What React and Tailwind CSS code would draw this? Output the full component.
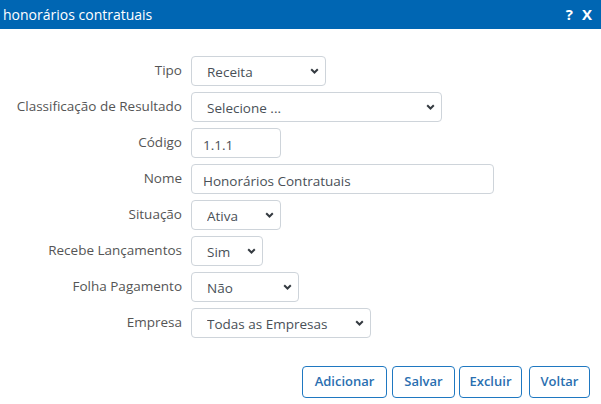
import React from 'react';

const font = { fontFamily: '"Open Sans", "Noto Sans", sans-serif' };

function Chevron() {
  return (
    <svg className="pointer-events-none absolute right-[7px] top-1/2 -translate-y-1/2" width="9" height="7" viewBox="0 0 9 7">
      <path d="M1.2 1.8 L4.5 5 L7.8 1.8" fill="none" stroke="#343a40" strokeWidth="2" />
    </svg>
  );
}

function Select({ value, width, options }) {
  return (
    <div className="relative" style={{ width }}>
      <select
        defaultValue={value}
        className="h-[30px] w-full appearance-none rounded-[4px] border border-[#ced4da] bg-white pl-[15px] pr-6 pt-[3px] text-[13.5px] text-[#495057] outline-none"
      >
        {options.map((o) => (
          <option key={o}>{o}</option>
        ))}
      </select>
      <Chevron />
    </div>
  );
}

function Input({ value, width }) {
  return (
    <input
      defaultValue={value}
      style={{ width }}
      className="h-[30px] rounded-[4px] border border-[#ced4da] bg-white px-[11px] pt-[3px] text-[13.5px] text-[#495057] outline-none"
    />
  );
}

function Row({ label, children }) {
  return (
    <div className="flex items-start">
      <label className="w-[182px] shrink-0 pt-[5px] text-right text-[13.5px] leading-[18px] text-[#555]">{label}</label>
      <div className="ml-[9px]">{children}</div>
    </div>
  );
}

export default function App() {
  const fields = [
    { label: 'Tipo', el: <Select value="Receita" width={135} options={['Receita', 'Despesa']} /> },
    { label: 'Classificação de Resultado', el: <Select value="Selecione ..." width={251} options={['Selecione ...']} /> },
    { label: 'Código', el: <Input value="1.1.1" width={90} /> },
    { label: 'Nome', el: <Input value="Honorários Contratuais" width={303} /> },
    { label: 'Situação', el: <Select value="Ativa" width={90} options={['Ativa', 'Inativa']} /> },
    { label: 'Recebe Lançamentos', el: <Select value="Sim" width={72} options={['Sim', 'Não']} /> },
    { label: 'Folha Pagamento', el: <Select value="Não" width={108} options={['Sim', 'Não']} /> },
    { label: 'Empresa', el: <Select value="Todas as Empresas" width={180} options={['Todas as Empresas']} /> },
  ];

  const btn = 'h-[32px] rounded-[4px] border border-[#1f78c1] text-[13px] font-semibold text-[#2a6fb0]';

  return (
    <div className="h-[404px] w-[601px] overflow-hidden bg-white" style={font}>
      {/* Title bar */}
      <div className="flex h-[29px] items-center justify-between bg-[#0066b3] pl-[3px] pr-[9px] text-white">
        <span className="text-[14px]">honorários contratuais</span>
        <div className="flex items-center gap-[9px] text-[15px] font-bold">
          <span>?</span>
          <span>X</span>
        </div>
      </div>

      {/* Form */}
      <div className="flex flex-col gap-[6px] pt-[27px]">
        {fields.map((f) => (
          <Row key={f.label} label={f.label}>
            {f.el}
          </Row>
        ))}
      </div>

      {/* Buttons */}
      <div className="mt-[28px] flex justify-end pr-[11px]">
        <button className={`${btn} w-[85px]`}>Adicionar</button>
        <button className={`${btn} ml-[5px] w-[63px]`}>Salvar</button>
        <button className={`${btn} ml-[4px] w-[63px]`}>Excluir</button>
        <button className={`${btn} ml-[7px] w-[61px]`}>Voltar</button>
      </div>
    </div>
  );
}
